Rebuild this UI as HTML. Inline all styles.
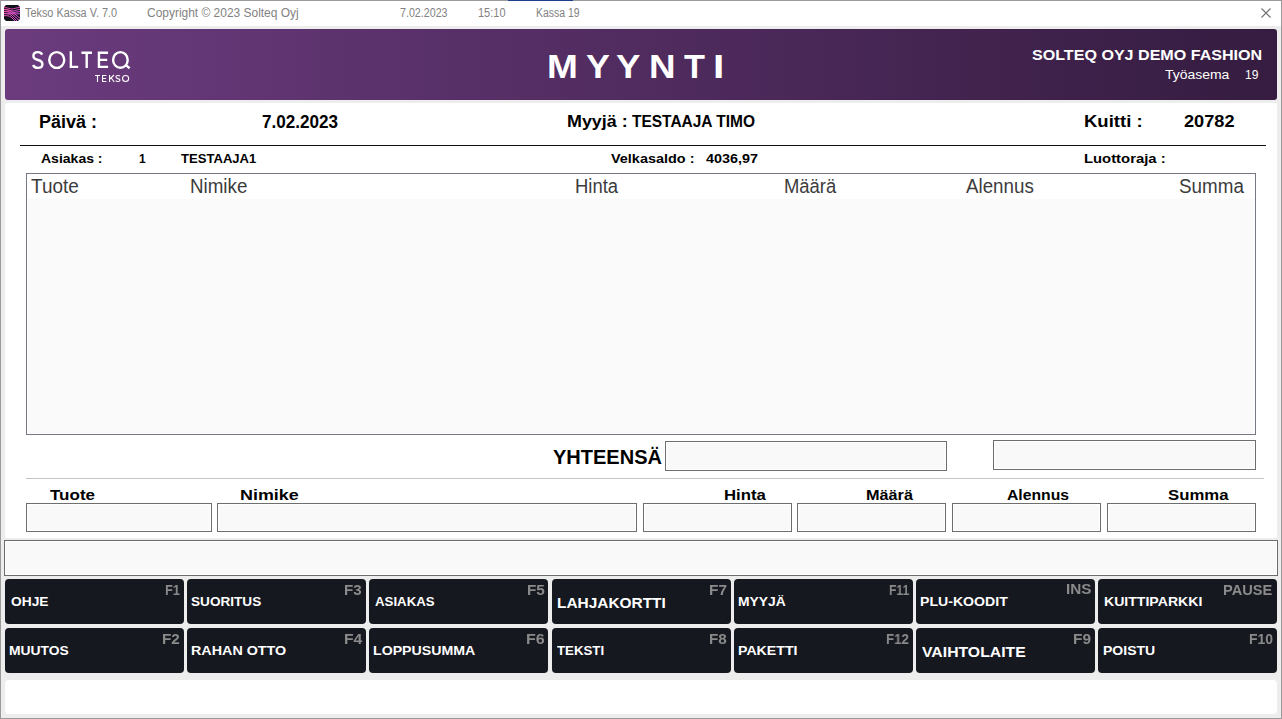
<!DOCTYPE html>
<html><head><meta charset="utf-8">
<style>
*{margin:0;padding:0;box-sizing:border-box}
html,body{width:1282px;height:719px;overflow:hidden;background:#ededed;font-family:"Liberation Sans",sans-serif}
.win{position:absolute;left:0;top:0;width:1282px;height:719px;border:1px solid #9a9a9a;background:#ededed}
.abs{position:absolute}
.t{position:absolute;white-space:nowrap;transform-origin:0 0}
.title{position:absolute;left:1px;top:1px;width:1280px;height:25px;background:#fff}
.hdr{position:absolute;left:5px;top:29px;width:1272px;height:71px;border-radius:3px;
 background:linear-gradient(90deg,#6b3b7e,#351c40)}
.panel{position:absolute;left:5px;top:103px;width:1272px;height:435px;border-radius:2px;background:#fff}
.box{position:absolute;border:1px solid #6e6e6e;background:#f9f9f9;box-shadow:inset 0 0 0 1px #fff}
.btn{position:absolute;background:#16181f;border-radius:4px}
</style></head><body>
<div class="win"></div>
<div class="title"></div>
<div class="abs" style="left:508px;top:0;width:65px;height:1px;background:#1b3f8f"></div>
<svg class="abs" style="left:4px;top:5px" width="16" height="16" viewBox="0 0 16 16">
<defs><linearGradient id="ig" x1="0" y1="0" x2="1" y2="1"><stop offset="0" stop-color="#ec4aa0"/><stop offset="1" stop-color="#d455f0"/></linearGradient>
<clipPath id="ic"><path d="M2 0H14L16 2V14L14 16H2L0 14V2Z"/></clipPath></defs>
<g clip-path="url(#ic)">
<rect x="0" y="0" width="16" height="16" fill="#121318"/>
<g stroke="url(#ig)" stroke-width="1" fill="none">
<path d="M0 2.6C4 2.6 6 4 8 4C10 4 12 2.6 16 2.4M0 4.6C4 4.6 7 6 9 6C11 6 13 4.6 16 4.4M0 6.6C4 6.6 8 7 10 7.5C12 7 14 6.8 16 6.6M0 8.6C4 8.6 10 8.8 16 8.8"/>
<path d="M0 4.6C3 4.6 5 4.8 7 6L18 15M0 6.6C3 6.6 5 6.8 7 8L16 16M0 8.6C3 8.6 5 8.8 7 10L14 17M0 10.6C3 10.6 5 10.8 7 12L12 17"/>
</g></g></svg>
<svg class="abs" style="left:1260px;top:7px" width="13" height="13" viewBox="0 0 13 13">
<path d="M1.5 1.5 L10.5 10.5 M10.5 1.5 L1.5 10.5" stroke="#707070" stroke-width="1.1"/>
</svg>
<div class="hdr"></div>
<div class="panel"></div>
<div class="abs" style="left:20px;top:145px;width:1246px;height:1px;background:#111"></div>
<div class="abs" style="left:26px;top:173px;width:1230px;height:262px;border:1px solid #747883;background:#fff"></div>
<div class="abs" style="left:28px;top:199px;width:1226px;height:234px;background:#fafafa"></div>
<div class="box" style="left:665px;top:441px;width:282px;height:30px"></div>
<div class="box" style="left:993px;top:440px;width:263px;height:30px"></div>
<div class="abs" style="left:26px;top:478px;width:1238px;height:1px;background:#c4c4c4"></div>
<div class="box" style="left:26px;top:503px;width:186px;height:29px"></div>
<div class="box" style="left:217px;top:503px;width:420px;height:29px"></div>
<div class="box" style="left:643px;top:503px;width:149px;height:29px"></div>
<div class="box" style="left:797px;top:503px;width:149px;height:29px"></div>
<div class="box" style="left:952px;top:503px;width:149px;height:29px"></div>
<div class="box" style="left:1107px;top:503px;width:149px;height:29px"></div>
<div class="box" style="left:4px;top:540px;width:1274px;height:36px;border-color:#6b6b6b"></div>
<div class="btn" style="left:5px;top:579px;width:179px;height:45px"></div>
<div class="btn" style="left:187px;top:579px;width:179px;height:45px"></div>
<div class="btn" style="left:369px;top:579px;width:179px;height:45px"></div>
<div class="btn" style="left:552px;top:579px;width:179px;height:45px"></div>
<div class="btn" style="left:734px;top:579px;width:179px;height:45px"></div>
<div class="btn" style="left:916px;top:579px;width:179px;height:45px"></div>
<div class="btn" style="left:1098px;top:579px;width:179px;height:45px"></div>
<div class="btn" style="left:5px;top:628px;width:179px;height:45px"></div>
<div class="btn" style="left:187px;top:628px;width:179px;height:45px"></div>
<div class="btn" style="left:369px;top:628px;width:179px;height:45px"></div>
<div class="btn" style="left:552px;top:628px;width:179px;height:45px"></div>
<div class="btn" style="left:734px;top:628px;width:179px;height:45px"></div>
<div class="btn" style="left:916px;top:628px;width:179px;height:45px"></div>
<div class="btn" style="left:1098px;top:628px;width:179px;height:45px"></div>
<div class="abs" style="left:5px;top:680px;width:1272px;height:34px;border-radius:4px;background:#fff"></div>
<svg class="abs" style="left:0;top:0" width="140" height="100" viewBox="0 0 140 100">
<g stroke="#fff" stroke-width="2.4" fill="none">
<path d="M42.2 54.6C41.3 52.8 39.7 52.1 37.8 52.1C35.2 52.1 33.4 53.7 33.4 56C33.4 58.4 35.4 59.3 38 60C40.8 60.7 42.4 61.8 42.4 64.2C42.4 66.6 40.4 67.9 37.8 67.9C35.6 67.9 33.8 66.9 33.1 65"/>
<ellipse cx="56.75" cy="60" rx="7.5" ry="7.85"/>
<path d="M70.85 51.2V66.85H78.2"/>
<path d="M81.4 52.75H92M86.7 52.75V68"/>
<path d="M108.1 52.75H98.95V66.85H108.1M98.95 59.9H107.2"/>
<ellipse cx="120.4" cy="59.95" rx="7.3" ry="7.8"/>
<path d="M125.6 64.9L129.6 68.2"/>
</g><g stroke="#fff" stroke-width="1.1" fill="none">
<path d="M95 75.55H100M97.5 75.55V82"/>
<path d="M106.4 75.55H102.55V81.45H106.4M102.55 78.5H106"/>
<path d="M109.55 75V82M114 75L109.8 79M111.2 78L114.2 82"/>
<path d="M120 76.3C119.6 75.6 118.8 75.5 117.9 75.5C116.6 75.5 115.9 76.1 115.9 77C115.9 78 116.8 78.3 117.9 78.6C119.2 78.9 120 79.3 120 80.3C120 81.3 119.1 81.5 117.8 81.5C116.8 81.5 116 81.2 115.6 80.6"/>
<ellipse cx="125.6" cy="78.5" rx="3.05" ry="2.95"/>
</g></svg>
<div class="t" style="left:25.00px;top:6.00px;font-size:13.08px;line-height:13.08px;font-weight:400;color:#828282;transform:scaleX(0.8318);">Tekso Kassa V. 7.0</div>
<div class="t" style="left:146.69px;top:6.00px;font-size:13.08px;line-height:13.08px;font-weight:400;color:#828282;transform:scaleX(0.9140);">Copyright © 2023 Solteq Oyj</div>
<div class="t" style="left:399.78px;top:6.00px;font-size:13.08px;line-height:13.08px;font-weight:400;color:#828282;transform:scaleX(0.8175);">7.02.2023</div>
<div class="t" style="left:477.76px;top:6.00px;font-size:13.08px;line-height:13.08px;font-weight:400;color:#828282;transform:scaleX(0.8419);">15:10</div>
<div class="t" style="left:535.50px;top:6.00px;font-size:13.08px;line-height:13.08px;font-weight:400;color:#828282;transform:scaleX(0.7981);">Kassa 19</div>
<div class="t" style="left:1032.09px;top:48.00px;font-size:14.53px;line-height:14.53px;font-weight:700;color:#fff;transform:scaleX(1.1078);">SOLTEQ OYJ DEMO FASHION</div>
<div class="t" style="left:1165.00px;top:68.00px;font-size:13.08px;line-height:13.08px;font-weight:400;color:#fff;transform:scaleX(1.0667);">Työasema</div>
<div class="t" style="left:1245.08px;top:68.00px;font-size:13.08px;line-height:13.08px;font-weight:400;color:#fff;transform:scaleX(0.9231);">19</div>
<div class="t" style="left:546.58px;top:50.00px;font-size:33.43px;line-height:33.43px;font-weight:700;color:#fff;transform:scaleX(1.1083);">M</div>
<div class="t" style="left:585.93px;top:50.00px;font-size:33.43px;line-height:33.43px;font-weight:700;color:#fff;transform:scaleX(1.0714);">Y</div>
<div class="t" style="left:615.90px;top:50.00px;font-size:33.43px;line-height:33.43px;font-weight:700;color:#fff;transform:scaleX(1.0952);">Y</div>
<div class="t" style="left:648.80px;top:50.00px;font-size:33.43px;line-height:33.43px;font-weight:700;color:#fff;transform:scaleX(1.1000);">N</div>
<div class="t" style="left:684.00px;top:50.00px;font-size:33.43px;line-height:33.43px;font-weight:700;color:#fff;transform:scaleX(1.0250);">T</div>
<div class="t" style="left:713.06px;top:50.00px;font-size:33.43px;line-height:33.43px;font-weight:700;color:#fff;transform:scaleX(1.2200);">I</div>
<div class="t" style="left:39.47px;top:113.50px;font-size:17.44px;line-height:17.44px;font-weight:700;color:#000;transform:scaleX(1.0315);">Päivä :</div>
<div class="t" style="left:261.52px;top:113.50px;font-size:17.44px;line-height:17.44px;font-weight:700;color:#000;transform:scaleX(0.9803);">7.02.2023</div>
<div class="t" style="left:567.46px;top:113.40px;font-size:17.15px;line-height:17.15px;font-weight:700;color:#000;transform:scaleX(1.0446);">Myyjä :</div>
<div class="t" style="left:632.00px;top:113.40px;font-size:17.15px;line-height:17.15px;font-weight:700;color:#000;transform:scaleX(0.9029);">TESTAAJA TIMO</div>
<div class="t" style="left:1083.79px;top:114.05px;font-size:16.72px;line-height:16.72px;font-weight:700;color:#000;transform:scaleX(1.1080);">Kuitti :</div>
<div class="t" style="left:1184.00px;top:114.05px;font-size:16.72px;line-height:16.72px;font-weight:700;color:#000;transform:scaleX(1.0870);">20782</div>
<div class="t" style="left:40.50px;top:152.00px;font-size:13.08px;line-height:13.08px;font-weight:700;color:#000;transform:scaleX(1.0714);">Asiakas :</div>
<div class="t" style="left:139.08px;top:152.00px;font-size:13.08px;line-height:13.08px;font-weight:700;color:#000;transform:scaleX(0.9167);">1</div>
<div class="t" style="left:181.00px;top:152.00px;font-size:13.08px;line-height:13.08px;font-weight:700;color:#000;transform:scaleX(1.0000);">TESTAAJA1</div>
<div class="t" style="left:610.50px;top:152.00px;font-size:13.08px;line-height:13.08px;font-weight:700;color:#000;transform:scaleX(1.1040);">Velkasaldo :</div>
<div class="t" style="left:706.00px;top:152.00px;font-size:13.08px;line-height:13.08px;font-weight:700;color:#000;transform:scaleX(1.1000);">4036,97</div>
<div class="t" style="left:1083.77px;top:152.00px;font-size:13.08px;line-height:13.08px;font-weight:700;color:#000;transform:scaleX(1.1343);">Luottoraja :</div>
<div class="t" style="left:31.00px;top:177.10px;font-size:19.77px;line-height:19.77px;font-weight:400;color:#3c3c3c;transform:scaleX(0.9592);">Tuote</div>
<div class="t" style="left:190.00px;top:177.10px;font-size:19.77px;line-height:19.77px;font-weight:400;color:#3c3c3c;transform:scaleX(0.9500);">Nimike</div>
<div class="t" style="left:574.63px;top:177.10px;font-size:19.77px;line-height:19.77px;font-weight:400;color:#3c3c3c;transform:scaleX(0.9341);">Hinta</div>
<div class="t" style="left:784.14px;top:177.10px;font-size:19.77px;line-height:19.77px;font-weight:400;color:#3c3c3c;transform:scaleX(0.9315);">Määrä</div>
<div class="t" style="left:966.30px;top:177.10px;font-size:19.77px;line-height:19.77px;font-weight:400;color:#3c3c3c;transform:scaleX(0.9493);">Alennus</div>
<div class="t" style="left:1178.85px;top:177.10px;font-size:19.77px;line-height:19.77px;font-weight:400;color:#3c3c3c;transform:scaleX(0.9522);">Summa</div>
<div class="t" style="left:553.02px;top:447.00px;font-size:20.35px;line-height:20.35px;font-weight:700;color:#000;transform:scaleX(0.9835);">YHTEENSÄ</div>
<div class="t" style="left:49.50px;top:488.00px;font-size:14.53px;line-height:14.53px;font-weight:700;color:#000;transform:scaleX(1.1711);">Tuote</div>
<div class="t" style="left:240.27px;top:488.00px;font-size:14.53px;line-height:14.53px;font-weight:700;color:#000;transform:scaleX(1.2348);">Nimike</div>
<div class="t" style="left:723.64px;top:488.00px;font-size:14.53px;line-height:14.53px;font-weight:700;color:#000;transform:scaleX(1.1556);">Hinta</div>
<div class="t" style="left:865.58px;top:488.00px;font-size:14.53px;line-height:14.53px;font-weight:700;color:#000;transform:scaleX(1.1195);">Määrä</div>
<div class="t" style="left:1006.70px;top:488.00px;font-size:14.53px;line-height:14.53px;font-weight:700;color:#000;transform:scaleX(1.0842);">Alennus</div>
<div class="t" style="left:1168.15px;top:488.00px;font-size:14.53px;line-height:14.53px;font-weight:700;color:#000;transform:scaleX(1.1538);">Summa</div>
<div class="t" style="left:10.50px;top:595.10px;font-size:13.37px;line-height:13.37px;font-weight:700;color:#fff;transform:scaleX(1.0306);">OHJE</div>
<div class="t" style="left:190.88px;top:595.10px;font-size:13.37px;line-height:13.37px;font-weight:700;color:#fff;transform:scaleX(1.0176);">SUORITUS</div>
<div class="t" style="left:374.50px;top:595.10px;font-size:13.37px;line-height:13.37px;font-weight:700;color:#fff;transform:scaleX(0.9917);">ASIAKAS</div>
<div class="t" style="left:556.76px;top:596.10px;font-size:14.83px;line-height:14.83px;font-weight:700;color:#fff;transform:scaleX(1.0398);">LAHJAKORTTI</div>
<div class="t" style="left:738.34px;top:595.00px;font-size:13.08px;line-height:13.08px;font-weight:700;color:#fff;transform:scaleX(1.0591);">MYYJÄ</div>
<div class="t" style="left:920.42px;top:595.00px;font-size:13.08px;line-height:13.08px;font-weight:700;color:#fff;transform:scaleX(1.0790);">PLU-KOODIT</div>
<div class="t" style="left:1104.12px;top:595.00px;font-size:13.08px;line-height:13.08px;font-weight:700;color:#fff;transform:scaleX(1.0767);">KUITTIPARKKI</div>
<div class="t" style="left:9.47px;top:644.15px;font-size:13.52px;line-height:13.52px;font-weight:700;color:#fff;transform:scaleX(1.0263);">MUUTOS</div>
<div class="t" style="left:191.34px;top:644.15px;font-size:13.52px;line-height:13.52px;font-weight:700;color:#fff;transform:scaleX(1.0602);">RAHAN OTTO</div>
<div class="t" style="left:373.45px;top:644.15px;font-size:13.52px;line-height:13.52px;font-weight:700;color:#fff;transform:scaleX(1.0469);">LOPPUSUMMA</div>
<div class="t" style="left:557.30px;top:644.00px;font-size:13.08px;line-height:13.08px;font-weight:700;color:#fff;transform:scaleX(1.0130);">TEKSTI</div>
<div class="t" style="left:738.32px;top:644.00px;font-size:13.08px;line-height:13.08px;font-weight:700;color:#fff;transform:scaleX(1.0830);">PAKETTI</div>
<div class="t" style="left:921.50px;top:644.90px;font-size:14.83px;line-height:14.83px;font-weight:700;color:#fff;transform:scaleX(1.0639);">VAIHTOLAITE</div>
<div class="t" style="left:1102.53px;top:644.00px;font-size:13.08px;line-height:13.08px;font-weight:700;color:#fff;transform:scaleX(1.0723);">POISTU</div>
<div class="t" style="left:164.79px;top:583.15px;font-size:14.10px;line-height:14.10px;font-weight:700;color:#8a8a8a;transform:scaleX(0.9133);will-change:transform;">F1</div>
<div class="t" style="left:344.43px;top:583.15px;font-size:14.10px;line-height:14.10px;font-weight:700;color:#8a8a8a;transform:scaleX(1.0733);will-change:transform;">F3</div>
<div class="t" style="left:526.61px;top:583.15px;font-size:14.10px;line-height:14.10px;font-weight:700;color:#8a8a8a;transform:scaleX(1.0867);will-change:transform;">F5</div>
<div class="t" style="left:708.91px;top:583.15px;font-size:14.10px;line-height:14.10px;font-weight:700;color:#8a8a8a;transform:scaleX(1.0933);will-change:transform;">F7</div>
<div class="t" style="left:888.64px;top:583.15px;font-size:14.10px;line-height:14.10px;font-weight:700;color:#8a8a8a;transform:scaleX(0.8591);will-change:transform;">F11</div>
<div class="t" style="left:1065.71px;top:582.15px;font-size:14.10px;line-height:14.10px;font-weight:700;color:#8a8a8a;transform:scaleX(1.0864);will-change:transform;">INS</div>
<div class="t" style="left:1223.17px;top:583.10px;font-size:14.24px;line-height:14.24px;font-weight:700;color:#8a8a8a;transform:scaleX(1.0277);will-change:transform;">PAUSE</div>
<div class="t" style="left:162.41px;top:633.20px;font-size:13.95px;line-height:13.95px;font-weight:700;color:#8a8a8a;transform:scaleX(1.0933);will-change:transform;">F2</div>
<div class="t" style="left:343.76px;top:632.95px;font-size:13.81px;line-height:13.81px;font-weight:700;color:#8a8a8a;transform:scaleX(1.1400);will-change:transform;">F4</div>
<div class="t" style="left:525.55px;top:633.20px;font-size:13.95px;line-height:13.95px;font-weight:700;color:#8a8a8a;transform:scaleX(1.1533);will-change:transform;">F6</div>
<div class="t" style="left:708.91px;top:633.20px;font-size:13.95px;line-height:13.95px;font-weight:700;color:#8a8a8a;transform:scaleX(1.0933);will-change:transform;">F8</div>
<div class="t" style="left:885.85px;top:633.20px;font-size:13.95px;line-height:13.95px;font-weight:700;color:#8a8a8a;transform:scaleX(0.9522);will-change:transform;">F12</div>
<div class="t" style="left:1072.58px;top:632.95px;font-size:13.81px;line-height:13.81px;font-weight:700;color:#8a8a8a;transform:scaleX(1.1200);will-change:transform;">F9</div>
<div class="t" style="left:1248.81px;top:633.20px;font-size:13.95px;line-height:13.95px;font-weight:700;color:#8a8a8a;transform:scaleX(0.9870);will-change:transform;">F10</div>
</body></html>
